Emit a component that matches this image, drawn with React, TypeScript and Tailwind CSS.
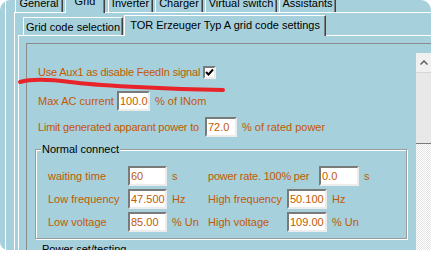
import React from 'react';

const topTabs = [
  { label: 'General', w: 'w-[48px]', ml: 'ml-[1px]' },
  { label: 'Grid', w: 'w-[40px]', ml: 'ml-[2px]', active: true },
  { label: 'Inverter', w: 'w-[45px]', ml: 'ml-[3px]' },
  { label: 'Charger', w: 'w-[48px]', ml: 'ml-[2px]' },
  { label: 'Virtual switch', w: 'w-[72px]', ml: 'ml-[2px]' },
  { label: 'Assistants', w: 'w-[57px]', ml: 'ml-[2px]' },
];

function Field({ value, w }: { value: string; w: string }) {
  return (
    <div
      className={`${w} h-[20px] flex items-center bg-white border-2 border-t-[#7a7a7a] border-l-[#7a7a7a] border-r-[#ececec] border-b-[#ececec] pl-[1px] text-[#c25a00] shrink-0`}
    >
      {value}
    </div>
  );
}

function CheckBox() {
  return (
    <div className="w-[13px] h-[13px] bg-white border-2 border-t-[#7a7a7a] border-l-[#7a7a7a] border-r-[#ececec] border-b-[#ececec] flex items-center justify-center shrink-0">
      <svg width="9" height="9" viewBox="0 0 9 9">
        <path d="M1 4 L3.5 6.5 L8 1.5" fill="none" stroke="#000" strokeWidth="2" />
      </svg>
    </div>
  );
}

function GroupRow({
  left,
  leftVal,
  leftUnit,
  right,
  rightW,
  rightVal,
  rightUnit,
}: {
  left: string;
  leftVal: string;
  leftUnit: string;
  right: string;
  rightW: string;
  rightVal: string;
  rightUnit: string;
}) {
  return (
    <div className="flex items-center h-[20px] pl-[12px] whitespace-nowrap">
      <span className="w-[80px] shrink-0">{left}</span>
      <Field value={leftVal} w="w-[39px]" />
      <span className="ml-[5px] w-[36px] shrink-0">{leftUnit}</span>
      <span className={`${rightW} shrink-0`}>{right}</span>
      <Field value={rightVal} w="w-[40px]" />
      <span className="ml-[5px]">{rightUnit}</span>
    </div>
  );
}

export default function App() {
  return (
    <div className="relative w-[431px] h-[255px] overflow-hidden bg-white font-['Liberation_Sans',Arial,sans-serif] text-[11px] leading-[13px]">
      {/* window */}
      <div className="h-[250px] bg-[#a6d0dc] rounded-t-[10px] rounded-bl-[8px] overflow-hidden flex pl-[5px]">
        <div className="flex-1 flex flex-col border-l border-white pl-[8px] min-w-0">
          {/* main tabs (cut at the top edge) */}
          <div className="flex items-end h-[12px] shrink-0">
            {topTabs.map((t) => (
              <div
                key={t.label}
                className={`${t.w} ${t.ml} shrink-0 text-center text-black bg-[#a6d0dc] border-l border-t border-white border-r border-r-[#404040] shadow-[inset_-1px_0_0_#808080] whitespace-nowrap ${
                  t.active ? 'h-[21px] -mb-px relative z-10 pt-[2px]' : 'h-[18px] pt-[2px]'
                }`}
              >
                {t.label}
              </div>
            ))}
          </div>

          {/* main tab page */}
          <div className="flex-1 flex flex-col border-l border-t border-white pl-[3px] pt-[2px] min-h-0">
            <div className="flex items-end h-[20px] shrink-0">
              <div className="ml-[5px] w-[100px] h-[18px] pt-[3px] text-center text-black border-l border-t border-white border-r border-r-[#404040] shadow-[inset_-1px_0_0_#808080] whitespace-nowrap">
                Grid code selection
              </div>
              <div className="ml-[1px] w-[202px] h-[21px] -mb-px relative z-10 pt-[3px] text-center text-black bg-[#a6d0dc] border-l border-t border-white border-r border-r-[#404040] shadow-[inset_-1px_0_0_#808080] whitespace-nowrap">
                TOR Erzeuger Typ A grid code settings
              </div>
            </div>

            <div className="flex-1 flex flex-col border-l border-t border-white pl-[7px] pt-[7px] min-h-0">
              <div className="flex-1 flex border-l border-t border-[#8c8c8c] min-h-0">
                {/* scroll content */}
                <div className="flex-1 flex flex-col text-[#c25a00] whitespace-nowrap min-w-0">
                  <div className="mt-[22px] h-[14px] flex items-center pl-[11px]">
                    <span className="w-[165px] shrink-0 tracking-[-0.2px]">Use Aux1 as disable FeedIn signal</span>
                    <CheckBox />
                  </div>
                  <div className="mt-[12px] flex items-center pl-[11px]">
                    <span className="w-[79px] shrink-0">Max AC current</span>
                    <Field value="100.0" w="w-[33px]" />
                    <span className="ml-[5px]">% of INom</span>
                  </div>
                  <div className="mt-[6px] flex items-center pl-[11px]">
                    <span className="w-[167px] shrink-0 tracking-[-0.2px]">Limit generated apparant power to</span>
                    <Field value="72.0" w="w-[32px]" />
                    <span className="ml-[5px]">% of rated power</span>
                  </div>

                  {/* Normal connect group */}
                  <div className="mt-[12px] ml-[8px] w-[372px] h-[90px] shrink-0 flex flex-col border border-[#9c9c9c] shadow-[1px_1px_0_#fff,inset_1px_1px_0_#fff]">
                    <span className="-mt-[7px] ml-[5px] self-start px-[1px] bg-[#a6d0dc] text-black">Normal connect</span>
                    <div className="mt-[10px] flex flex-col gap-[3px]">
                      <GroupRow
                        left="waiting time"
                        leftVal="60"
                        leftUnit="s"
                        right="power rate. 100% per"
                        rightW="w-[111px] tracking-[-0.2px]"
                        rightVal="0.0"
                        rightUnit="s"
                      />
                      <GroupRow
                        left="Low frequency"
                        leftVal="47.500"
                        leftUnit="Hz"
                        right="High frequency"
                        rightW="w-[79px]"
                        rightVal="50.100"
                        rightUnit="Hz"
                      />
                      <GroupRow
                        left="Low voltage"
                        leftVal="85.00"
                        leftUnit="% Un"
                        right="High voltage"
                        rightW="w-[79px]"
                        rightVal="109.00"
                        rightUnit="% Un"
                      />
                    </div>
                  </div>

                  <div className="mt-[4px] ml-[15px] text-black">Power set/testing</div>
                </div>

                {/* scrollbar */}
                <div className="w-[15px] mt-[9px] flex flex-col shrink-0">
                  <div className="h-[19px] bg-[#f0f0f0] flex items-center justify-center">
                    <svg width="8" height="5" viewBox="0 0 8 5">
                      <path d="M0.5 4.5 L4 1 L7.5 4.5" fill="none" stroke="#606060" strokeWidth="1.5" />
                    </svg>
                  </div>
                  <div className="h-[72px] bg-[#e8e8e8] border-t border-[#d6d6d6] border-b border-b-[#7a7a7a]" />
                  <div className="flex-1 bg-[conic-gradient(#fff_25%,#e4e4e4_0_50%,#fff_0_75%,#e4e4e4_0)] bg-[length:2px_2px]" />
                </div>
              </div>
            </div>
          </div>
        </div>
      </div>

      {/* red hand-drawn underline */}
      <svg className="absolute left-0 top-0 pointer-events-none" width="431" height="255">
        <path
          d="M20 82 C 30 79, 48 79, 70 82 S 160 89, 223 90"
          fill="none"
          stroke="#e8232a"
          strokeWidth="4"
          strokeLinecap="round"
        />
      </svg>
    </div>
  );
}
